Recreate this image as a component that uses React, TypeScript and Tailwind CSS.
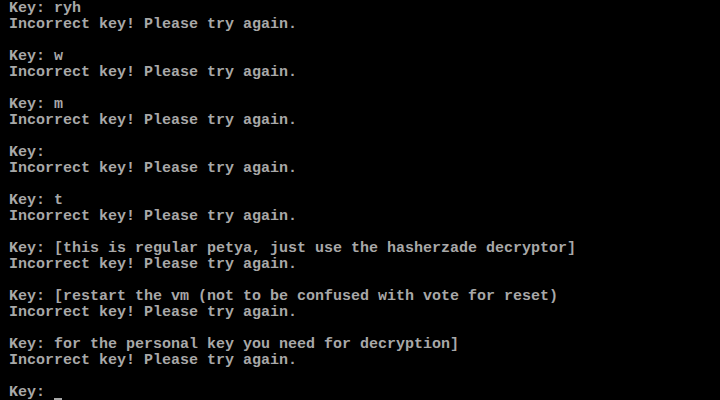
const lines = [
  "Key: ryh",
  "Incorrect key! Please try again.",
  "",
  "Key: w",
  "Incorrect key! Please try again.",
  "",
  "Key: m",
  "Incorrect key! Please try again.",
  "",
  "Key:",
  "Incorrect key! Please try again.",
  "",
  "Key: t",
  "Incorrect key! Please try again.",
  "",
  "Key: [this is regular petya, just use the hasherzade decryptor]",
  "Incorrect key! Please try again.",
  "",
  "Key: [restart the vm (not to be confused with vote for reset)",
  "Incorrect key! Please try again.",
  "",
  "Key: for the personal key you need for decryption]",
  "Incorrect key! Please try again.",
  "",
]

const App = () => {
  return (
    <div className="w-[720px] h-[400px] bg-black overflow-hidden text-[#a8a8a8] font-['Liberation_Mono',monospace] font-bold text-[15px] leading-[16px]">
      {lines.map((line, i) => (
        <div key={i} className="h-[16px] pt-[1px] whitespace-pre">
          {line ? " " + line : " "}
        </div>
      ))}
      <div className="h-[16px] whitespace-pre flex">
        <span className="pt-[1px]">{" Key: "}</span>
        <span className="w-[9px] h-[16px] flex flex-col justify-end">
          <span className="block h-[2px] w-[8px] bg-[#a8a8a8]" />
        </span>
      </div>
    </div>
  )
}

export default App
